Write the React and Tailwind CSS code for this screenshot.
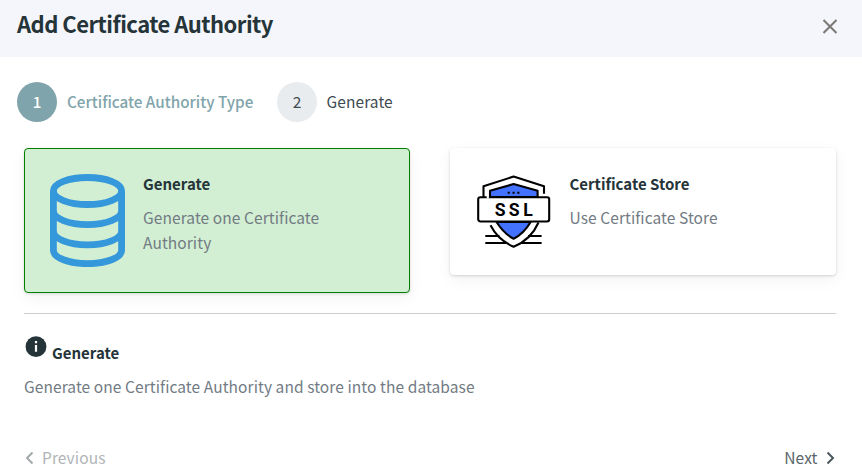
import React from 'react';

function DatabaseIcon() {
  return (
    <svg width="75" height="93" viewBox="0 0 75 93" fill="none" stroke="#3498db" strokeWidth="6.8" className="block shrink-0">
      <ellipse cx="37.5" cy="17" rx="34.1" ry="13.5" />
      <path d="M3.4 17V76.2C3.4 83.7 18.7 89.7 37.5 89.7S71.6 83.7 71.6 76.2V17" />
      <path d="M3.4 37C3.4 44.5 18.7 50.6 37.5 50.6S71.6 44.5 71.6 37" />
      <path d="M3.4 57.2C3.4 64.7 18.7 70.8 37.5 70.8S71.6 64.7 71.6 57.2" />
    </svg>
  );
}

function SslIcon() {
  return (
    <svg width="74" height="74" viewBox="0 0 74 74" fill="none" stroke="#000" strokeWidth="2.1" strokeLinejoin="round" className="block shrink-0">
      <path d="M6.5 22V11.2L36.6 1.6L67 11.2V18.8" />
      <path d="M13 22V15.8L36.6 9L60.6 15.8V22Z" fill="#4272ff" />
      <path d="M19.5 47C24 54 30 60.3 36.6 63.8C43.5 60.3 49.5 54 53.7 47Z" fill="#4272ff" />
      <path d="M13.5 50.2C18 59 27 67.5 36.6 71.8C47 67.5 56.5 59 61.5 47.5" />
      <path d="M8.3 61H22.5M51 61H64.6M8.3 68H29M44.5 68H64.6" />
      <rect x="1.2" y="22.2" width="71" height="24.3" rx="2.2" fill="#fff" />
      <path d="M9.7 22.2H11.9" stroke="#fff" strokeWidth="2.5" />
      <path d="M30.7 17.7H32.8M35.5 17.7H37.6M40.3 17.7H42.4" />
      <text x="17.7 31.7 46.2" y="40.8" fill="#000" stroke="none" fontFamily="Roboto, sans-serif" fontWeight="700" fontSize="17.6">SSL</text>
    </svg>
  );
}

function Card({ selected, icon, title, text }) {
  return (
    <div
      className={
        selected
          ? 'flex h-[145px] w-[386px] rounded border border-[#008000] bg-[#d3efd3] pt-[25px] pl-[25px] shadow-[0_1px_3px_rgba(0,0,0,0.12),0_5px_16px_rgba(0,0,0,0.05)]'
          : 'flex h-[127px] w-[386px] rounded bg-white pt-[27px] pl-[27px] shadow-[0_1px_3px_rgba(0,0,0,0.16),0_5px_16px_rgba(0,0,0,0.05)]'
      }
    >
      {icon}
      <div className={selected ? 'ml-[18px] w-[200px] -mt-[3px]' : 'ml-[18.5px] w-[200px] -mt-[4px]'}>
        <h2 className="text-[15px] leading-[25px] font-bold text-[#253439]">{title}</h2>
        <p className="mt-[9px] text-[15.5px] leading-[25px] tracking-[0.08px] text-[#727b84]">{text}</p>
      </div>
    </div>
  );
}

export default function App() {
  return (
    <div className="h-[476px] w-[862px] overflow-hidden bg-white font-['Noto_Sans_CJK_SC',sans-serif] text-[15.5px] text-[#3e4b51]">
      <header className="flex h-[57px] justify-between bg-[#f5f6fb] pt-[7px] pr-[25px] pl-[17px]">
        <h1 className="text-[22px] leading-[32px] font-bold tracking-[-0.52px] text-[#253439]">Add Certificate Authority</h1>
        <svg width="14" height="15" viewBox="0 0 14 15" stroke="#7b7875" strokeWidth="2" className="mt-[12px]">
          <path d="M0.5 1L13.5 14M13.5 1L0.5 14" />
        </svg>
      </header>
      <nav className="flex h-[91px] items-start pt-[25px] pl-[17px]">
        <div className="flex h-10 items-center text-[15.25px] leading-[22px] font-medium text-[#80a4ab]">
          <span className="flex size-10 items-center justify-center rounded-full bg-[#80a4ab] pb-[2px] text-white">1</span>
          <span className="ml-[10px] w-[186px] pb-[2px] whitespace-nowrap">Certificate Authority Type</span>
        </div>
        <div className="ml-[24px] flex h-10 items-center">
          <span className="flex size-10 items-center justify-center rounded-full bg-[#e9ecef]">2</span>
          <span className="ml-[9.5px] tracking-[0.08px]">Generate</span>
        </div>
      </nav>
      <main className="pr-[26px] pl-[24px]">
        <section className="flex h-[165px] items-start justify-between">
          <Card selected icon={<DatabaseIcon />} title="Generate" text="Generate one Certificate Authority" />
          <Card icon={<SslIcon />} title="Certificate Store" text="Use Certificate Store" />
        </section>
        <section className="h-[132px] border-t border-[#cccfd0] pt-[22px]">
          <div className="flex">
            <svg width="22" height="22" viewBox="0 0 22 22" className="ml-[1px]">
              <circle cx="11" cy="10.7" r="10.4" fill="#253439" />
              <path d="M11 5V7.2M11 9V15.7" stroke="#fff" strokeWidth="2.2" />
            </svg>
            <h2 className="mt-[4px] ml-[5px] text-[15px] leading-[25px] font-bold text-[#253439]">Generate</h2>
          </div>
          <p className="mt-[9px] leading-[25px] tracking-[0.08px] text-[#727b84]">Generate one Certificate Authority and store into the database</p>
        </section>
        <footer className="flex justify-between leading-[25px] tracking-[0.1px]">
          <div className="flex items-center text-[#b0b5b7]">
            <svg width="10" height="14" viewBox="0 0 10 14" fill="none" stroke="#a0a6a9" strokeWidth="1.9" className="mt-[1px]">
              <path d="M8.5 1.5L3 7L8.5 12.5" />
            </svg>
            <span className="ml-[8px]">Previous</span>
          </div>
          <div className="flex items-center text-[#59656a]">
            <span>Next</span>
            <svg width="10" height="14" viewBox="0 0 10 14" fill="none" stroke="#4b585d" strokeWidth="2" className="mt-[1px] ml-[8.5px]">
              <path d="M1.5 1.5L7 7L1.5 12.5" />
            </svg>
          </div>
        </footer>
      </main>
    </div>
  );
}
